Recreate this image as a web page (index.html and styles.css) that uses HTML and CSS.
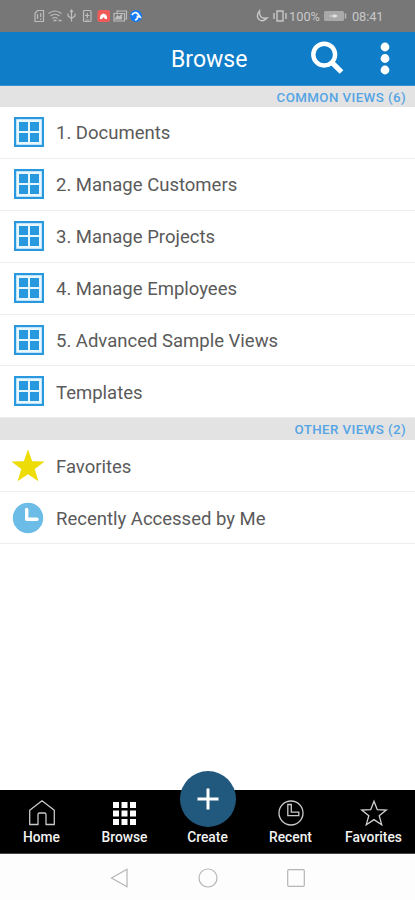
FILE: index.html
```html
<!DOCTYPE html>
<html lang="en">
<head>
<meta charset="utf-8">
<meta name="viewport" content="width=device-width">
<title>Browse</title>
<link rel="stylesheet" href="styles.css">
</head>
<body>
<svg class="defs" aria-hidden="true">
  <symbol id="view" viewBox="0 0 30 30"><path d="M0 0h30v30H0z" fill="#2898df"/><path d="M2.200 2.200h25.600v25.600H2.200z" fill="#e9f7ff"/><path d="M5 5h9v9H5zM16 5h9v9h-9zM5 16h9v9H5zM16 16h9v9h-9z" fill="#2898df"/></symbol>
</svg>
<div class="status">
  <svg class="status-left" width="110" height="16" viewBox="0 0 110 16" fill="none" stroke="#bdbdbd" stroke-width="1.2">
    <path d="M4.500 2.500H10.500v11H2V5.300zM4.500 6v5M7.700 5v4M7.700 10.500v1.500"/>
    <path d="M15.500 5.500q6.500-5 13 0M17.500 8q4.500-3.500 9 0M19.500 10.500q2.500-2 5 0"/><path d="M20.500 12.500h3M25.500 12.500h3" stroke-width="1.500"/>
    <path d="M38.500 2.500v11M35 5.500v2.500l3.500 2.500L42 8V5.500M37 4l1.500-2L40 4"/>
    <rect x="50.500" y="2.500" width="7.500" height="11" rx="1"/><path d="M54.300 5v5M52 7.500h4.500M52.500 12H56"/>
    <rect x="64.500" y="2" width="12.500" height="12" rx="2.500" fill="#ef5b59" stroke="none"/><path d="M67 9.500 q0-3 3.500-4 3.500 1 3.500 4v1.500h-2q-1.500-3.500-3 0h-2z" fill="#fff" stroke="none"/>
    <path d="M84 5V3h9.500v8H92M81 5.500h10.500V13H81z"/><path d="M82.500 11l2-3.500 1.500 2L88.500 7v4z" fill="#bdbdbd"/>
    <circle cx="103" cy="8" r="6" fill="#167bf2" stroke="none"/><path d="M99 7q2.500-4 6-1l2 3-2.500-.5q.5 3-2.500 3.500" stroke="#fff" stroke-width="1.700"/>
  </svg>
  <div class="status-right">
    <svg width="33" height="16" viewBox="0 0 33 16" fill="none" stroke="#c8c8c8" stroke-width="1.400"><path d="M4.500 3Q.5 8 4 11.500q4 3 8-1.500-8 1.500-7.500-7z"/><path d="M22 3h6v10h-6zM19 5v6M31 5v6"/></svg>
    <span class="percent">100%</span>
    <svg class="battery" width="24" height="16" viewBox="0 0 24 16"><rect x="0" y="3" width="20" height="10" rx="1.500" fill="#a9a9a9"/><path d="M6 7.500h3l1-1.500 4 2-4 2-1-1.500H6z" fill="#e2e2e2"/><path d="M21.500 5.500v5" stroke="#b8b8b8" stroke-width="1.500"/></svg>
    <span class="time">08:41</span>
  </div>
</div>
<header class="header">
  <h1>Browse</h1>
  <svg class="search" width="34" height="34" viewBox="0 0 34 34" fill="none" stroke="#fff"><circle cx="14.200" cy="13.600" r="10.900" stroke-width="4.400"/><path d="m21.500 21.200 10 9.800" stroke-width="5.200"/></svg>
  <svg class="more" width="10" height="34" viewBox="0 0 10 34" fill="#fff"><circle cx="5" cy="5" r="4.400"/><circle cx="5" cy="16.500" r="4.400"/><circle cx="5" cy="28" r="4.400"/></svg>
</header>
<main class="content">
  <h2>COMMON VIEWS (6)</h2>
  <ul>
    <li><svg class="icon"><use href="#view"/></svg><span>1. Documents</span></li>
    <li><svg class="icon"><use href="#view"/></svg><span>2. Manage Customers</span></li>
    <li><svg class="icon"><use href="#view"/></svg><span>3. Manage Projects</span></li>
    <li><svg class="icon"><use href="#view"/></svg><span>4. Manage Employees</span></li>
    <li><svg class="icon"><use href="#view"/></svg><span>5. Advanced Sample Views</span></li>
    <li><svg class="icon"><use href="#view"/></svg><span>Templates</span></li>
  </ul>
  <h2 class="second">OTHER VIEWS (2)</h2>
  <ul>
    <li><svg class="symbol" viewBox="0 0 34 34"><path d="m17 .5 4.200 11.700 12.500.3-10 7.500 3.700 12.300L17 25.200 6.600 32.300 10.300 20 .3 12.500l12.500-.3z" fill="#eddc05"/></svg><span>Favorites</span></li>
    <li><svg class="symbol" viewBox="0 0 34 34"><circle cx="17" cy="17" r="15.200" fill="#6cbce8"/><path d="M15.700 8.500v9.700H26" fill="none" stroke="#fff" stroke-width="3.400" stroke-linecap="round" stroke-linejoin="round"/></svg><span>Recently Accessed by Me</span></li>
  </ul>
</main>
<nav class="tabs">
  <a><svg width="28" height="28" viewBox="0 0 28 28" fill="none" stroke="#c9c9c9" stroke-width="1.300" stroke-linejoin="round"><path d="m14 1.800 12.300 9.500v14.200h-8.300v-10q0-1.500-1.500-1.500h-5q-1.500 0-1.500 1.500v10H1.700V11.300z"/></svg><span>Home</span></a>
  <a><svg width="28" height="28" viewBox="0 0 28 28" fill="#fff"><path d="M2 3h6v6H2zM10.500 3h6v6h-6zM19 3h6v6h-6zM2 11.500h6v6H2zM10.500 11.500h6v6h-6zM19 11.500h6v6h-6zM2 20h6v6H2zM10.500 20h6v6h-6zM19 20h6v6h-6z"/></svg><span>Browse</span></a>
  <a class="create"><svg class="fab" width="56" height="56" viewBox="0 0 56 56"><circle cx="28" cy="28" r="28" fill="#20597d"/><path d="M28 17.500v21M17.500 28h21" stroke="#fff" stroke-width="3"/></svg><span>Create</span></a>
  <a><svg width="28" height="28" viewBox="0 0 28 28" fill="none" stroke="#c9c9c9" stroke-width="1.300"><circle cx="14" cy="14" r="12"/><path d="M10.800 5.500h3.500v7.700h7.500v3.500h-11z"/></svg><span>Recent</span></a>
  <a><svg width="28" height="28" viewBox="0 0 28 28" fill="none" stroke="#d2d2d2" stroke-width="1.300"><path d="m14 2.300 3.300 8.400 9 .4-7.100 5.600 2.500 9L14 20.600l-7.700 5.100 2.500-9-7.100-5.600 9-.4z"/></svg><span>Favorites</span></a>
</nav>
<footer class="system">
  <svg width="22" height="22" viewBox="0 0 22 22"><path d="M18 2.200v17.600L2.500 11z"/></svg>
  <svg width="22" height="22" viewBox="0 0 22 22"><circle cx="11" cy="11" r="9"/></svg>
  <svg width="22" height="22" viewBox="0 0 22 22"><rect x="2.700" y="2.700" width="16.600" height="16.600" rx="1"/></svg>
</footer>
</body>
</html>
```
FILE: styles.css
```css
* { box-sizing: border-box; }
body { margin: 0; height: 900px; display: flex; flex-direction: column; overflow: hidden; background: #fff; font-family: Roboto, sans-serif; color: #5a5a5a; }
svg { display: block; flex: none; }
.defs { position: absolute; width: 0; height: 0; }
.status { height: 32px; flex: none; background: #777; display: flex; align-items: center; justify-content: space-between; padding: 0 32px 0 33px; color: #c8c8c8; font-size: 12.8px; }
.status-right { display: flex; align-items: center; }
.percent { margin-left: 1px; width: 32px; }
.battery { margin: 0 4px 0 3px; }
.time { width: 31px; white-space: nowrap; letter-spacing: -.1px; }
.header { height: 54px; flex: none; background: #107dc8; border-bottom: 1px solid #3b91cc; display: flex; align-items: center; padding-left: 171px; color: #fff; }
h1 { margin: 1px 0 0; width: 139px; font-size: 23px; font-weight: 400; }
.search { margin-top: -1px; }
.more { margin-left: 36px; margin-top: 1px; }
.content { flex: 1; }
h2 { margin: 0; height: 21px; background: #e3e3e3; color: #55a5e5; font-size: 13.3px; line-height: 23px; font-weight: 500; text-align: right; padding-right: 9px; letter-spacing: .42px; }
.second { height: 22px; line-height: 24px; }
ul { list-style: none; margin: 0; padding: 0; }
li { height: 51.900px; border-bottom: 1px solid #eee; display: flex; align-items: center; font-size: 18.5px; white-space: nowrap; }
li span { padding-top: 2px; }
.icon { width: 30px; height: 30px; margin: 0 12px 1px 14px; }
.symbol { width: 34px; height: 34px; margin: 0 11px; }
.tabs { height: 64px; flex: none; background: #000; border-bottom: 1px solid #444; display: grid; grid-template-columns: repeat(5, 1fr); color: #f3f3f3; font-size: 13.8px; font-weight: 500; }
.tabs a { display: flex; flex-direction: column; align-items: center; padding-top: 9px; }
.tabs span { line-height: 18px; margin-top: 1px; }
.tabs .create { padding-top: 0; margin-top: -19px; }
.system { height: 46px; flex: none; background: #fdfdfd; display: flex; justify-content: center; align-items: center; gap: 66px; padding-top: 1px; }
.system svg { fill: none; stroke: #b5b5b5; stroke-width: 1.200; }
```
